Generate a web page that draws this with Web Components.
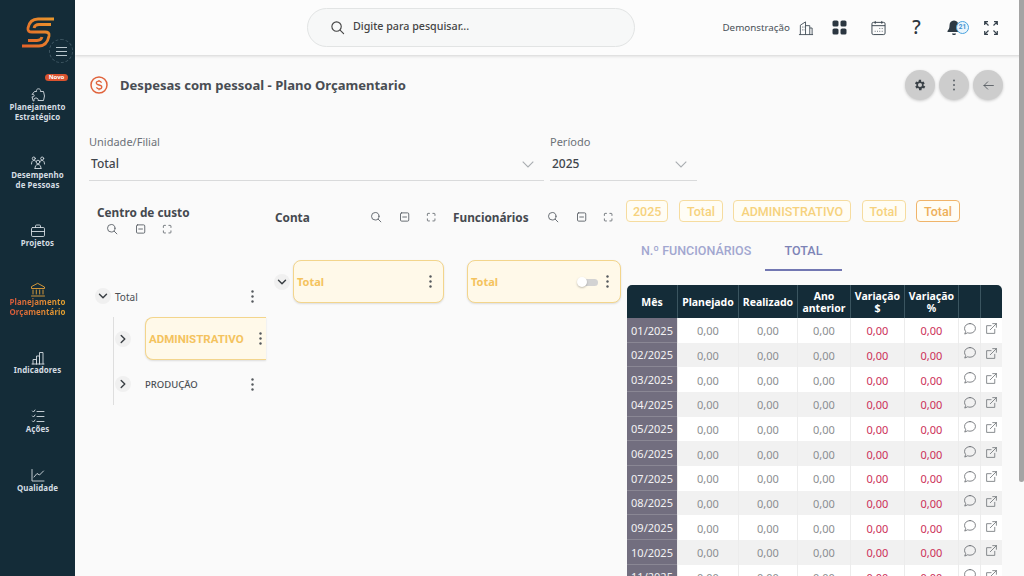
<!DOCTYPE html>
<html lang="pt-BR"><head><meta charset="utf-8"><title>Plano Orçamentario</title>
<style>
html,body{margin:0;padding:0;height:100%;overflow:hidden;background:#fafafa;font-family:"Noto Sans","Liberation Sans",sans-serif}
</style></head><body>
<app-shell></app-shell>
<script>
const I={
 search:'<circle cx="7" cy="7" r="5"/><path d="M11 11l3.500 3.500"/>',
 minus:'<rect x="2" y="2.500" width="11" height="11" rx="1.500"/><path d="M5 8h5"/>',
 full:'<path d="M2 5V3a1 1 0 0 1 1-1h2M10 2h2a1 1 0 0 1 1 1v2M13 10v2a1 1 0 0 1-1 1h-2M5 13H3a1 1 0 0 1-1-1v-2"/>',
 chatv:'<path d="M8 1.800c3.600 0 6.200 2.400 6.200 5.500s-2.600 5.500-6.200 5.500c-.9 0-1.800-.2-2.600-.5L2 13.800l1-3C2.200 9.800 1.800 8.600 1.800 7.300 1.800 4.200 4.400 1.800 8 1.800z"/>',
 ext:'<path d="M12 9v5H2V4.500h5.500"/><path d="M6.500 9.500L14 2M9.500 2H14v4.500"/>'
};
const svg=(p,s=16,vb=16,extra='')=>`<svg width="${s}" height="${s}" viewBox="0 0 ${vb} ${vb}" fill="none" stroke="currentColor" stroke-width="1.200" stroke-linecap="round" stroke-linejoin="round" ${extra}>${p}</svg>`;
function def(name,css,html,setup){
 customElements.define(name,class extends HTMLElement{
  connectedCallback(){ if(this.shadowRoot)return;
   const r=this.attachShadow({mode:'open'});
   r.innerHTML=`<style>${css}</style>`+(typeof html==='function'?html(this):html);
   setup&&setup(r,this);
  }
 });
}
const UB='"Noto Sans","Open Sans",sans-serif';
const RB='Roboto,"Liberation Sans",sans-serif';

def('nav-item',`
 :host{display:flex;flex-direction:column;align-items:center;color:#d5dde2;position:relative}
 :host([active]){color:#e5a23a}
 svg{display:block;height:16px;width:16px;margin-bottom:.5px}
 .l{font:700 7.900px/9.500px ${UB};text-align:center;white-space:pre-line;letter-spacing:.1px}
 :host([active]) .l{background:linear-gradient(90deg,#d9573a,#e8a62f);-webkit-background-clip:text;background-clip:text;color:transparent}
`,h=>`<svg viewBox="0 0 16 16" fill="none" stroke="currentColor" stroke-width=".9" stroke-linecap="round" stroke-linejoin="round">${h.dataset.i}</svg><div class="l">${h.getAttribute('label')}</div>`);

def('side-nav',`
 :host{display:flex;flex-direction:column;width:75px;flex:none;background:#142c38;position:relative;box-sizing:border-box;height:100%}
 .logo{height:74px;padding:17px 0 0 21px;box-sizing:border-box;flex:none}
 .burger{position:absolute;left:49px;top:39px;width:24px;height:24px;border:1px dashed #3d5561;border-radius:50%;display:flex;align-items:center;justify-content:center;color:#b9c6cc;box-sizing:border-box}
 .novo{position:absolute;left:45px;top:74px;width:23px;height:7px;border-radius:4px;background:#d9532f;color:#fff;font:700 6px/7px ${UB};text-align:center}
 nav{display:flex;flex-direction:column;padding-top:12.500px;gap:32.700px}
`,`<div class="logo"><svg width="34" height="31" viewBox="0 0 34 31" fill="none" stroke-width="2.800"><defs><linearGradient id="g" gradientUnits="userSpaceOnUse" x1="0" y1="30" x2="34" y2="0"><stop offset="0" stop-color="#e4602a"/><stop offset="1" stop-color="#ea9a2c"/></linearGradient></defs><g stroke="url(#g)"><path d="M33 2H17C11 2 8 6 7 11 6.500 14 8 15 11 15H24C27 15 28.500 16 28 19 27 24 24 29 18 29H1"/><path d="M30 7.500H18C15 7.500 13.500 9 13 11"/><path d="M7 23.500H16C19 23.500 20.500 22 21 20"/></g></svg></div>
 <div class="burger"><svg width="11" height="9" viewBox="0 0 11 9" stroke="currentColor" stroke-width="1"><path d="M0 .5h11M0 4.500h11M0 8.500h11"/></svg></div>
 <div class="novo">Novo</div>
 <nav>
 <nav-item label="Planejamento
Estratégico" data-i='<path d="M3 13.500L2 9.800C3.500 10.300 4.500 9.300 4.100 8.200 3.800 7.200 2.600 7 2 7.600L4.500 4.500H6.600C6 3 7 1.800 8.500 1.800S11 3 10.400 4.500H13.500L14.500 9 13.500 13.500H8C8.500 12 7.500 11 6 11S3.500 12 4 13.500z"/>'></nav-item>
 <nav-item label="Desempenho
de Pessoas" data-i='<circle cx="8" cy="7" r="1.800"/><circle cx="3.800" cy="3.500" r="1.500"/><circle cx="12.200" cy="3.500" r="1.500"/><path d="M5 13.500c0-2.500 1-4 3-4s3 1.500 3 4M1.500 9c0-2 .8-3.500 2.300-3.500s2 .7 2.200 1M14.500 9c0-2-.8-3.500-2.300-3.500s-2 .7-2.200 1M5 13.500h6"/>'></nav-item>
 <nav-item label="Projetos" data-i='<rect x="1.500" y="4.500" width="13" height="9" rx="1.200"/><path d="M5.500 4.500V3a1 1 0 0 1 1-1h3a1 1 0 0 1 1 1v1.500M1.500 8.500h13"/>'></nav-item>
 <nav-item active label="Planejamento
Orçamentário" data-i='<path d="M8 1.500L14.500 5v1.500h-13V5zM3 8v4M6.300 8v4M9.700 8v4M13 8v4M1.500 14h13"/>'></nav-item>
 <nav-item label="Indicadores" data-i='<path d="M3 14V9.500h3.500V14M6.500 14V6H9.500v8M9.500 14V2.500h3.500V14M2 14h12"/>'></nav-item>
 <nav-item label="Ações" data-i='<path d="M2.500 3l1 1 1.500-2M2.500 8l1 1 1.500-2M2.500 13l1 1 1.500-2M7 3.500h7M7 8.500h7M7 13.500h7"/>'></nav-item>
 <nav-item label="Qualidade" data-i='<path d="M2 2.500v11.500h12M4 10l3-3.500 2.500 1.500 4-4"/>'></nav-item>
 </nav>`);

def('top-bar',`
 :host{display:flex;align-items:center;height:55px;flex:none;background:#fcfcfc;box-shadow:0 1px 3px rgba(0,0,0,.16);position:relative;z-index:2;box-sizing:border-box;padding:0 26px 0 232px;color:#2d3a44}
 .s{width:328px;height:39px;box-sizing:border-box;border:1px solid #e2e4e4;border-radius:20px;background:#f7f8f8;display:flex;align-items:center;gap:8px;padding-left:22px;color:#444;font:500 10.700px ${UB}}
 .s span{padding-bottom:3px}
 .r{margin-left:auto;display:flex;align-items:center;font:400 9.800px ${UB};color:#4a5158}
 .ic{display:flex;align-items:center;justify-content:center;color:#36424c}
 .q{font:500 19px/19px ${UB};color:#2b3640;width:11px;margin-right:25px}
 .bell{position:relative;width:22px;margin-right:15px;justify-content:flex-start}
 .b{position:absolute;left:9px;top:1px;width:13px;height:13px;box-sizing:border-box;border-radius:50%;border:1px solid #4aa3df;background:#eaf5fc;color:#3c8fd0;font:700 6.500px/11px ${RB};text-align:center}
`,`<div class="s">${svg(I.search,15)}<span>Digite para pesquisar...</span></div>
 <div class="r"><span style="margin-right:8px">Demonstração</span>
 <span class="ic" style="margin-right:18px"><svg width="16" height="16" viewBox="0 0 17 16" fill="none" stroke="currentColor" stroke-width=".9"><path d="M1 15h15M2.500 15V5L8 1.500V15M8 5.500h4.500V15M12.500 8H15v7M4.500 7h.8M6 7h.8M4.500 10h.8M6 10h.8"/></svg></span>
 <span class="ic" style="margin-right:24px"><svg width="15" height="15" viewBox="0 0 15 15" fill="#2b3640"><rect x=".5" y=".5" width="6" height="6" rx="1.600"/><rect x="8.500" y=".5" width="6" height="6" rx="1.600"/><rect x=".5" y="8.500" width="6" height="6" rx="1.600"/><rect x="8.500" y="8.500" width="6" height="6" rx="1.600"/></svg></span>
 <span class="ic" style="margin-right:25px"><svg width="15" height="16" viewBox="0 0 16 17" fill="none" stroke="currentColor" stroke-width="1"><rect x="1" y="2.500" width="14" height="13" rx="1.500"/><path d="M1 6h14M4.500 1v3M11.500 1v3M9 9h.8M11.500 9h.8M4 12h.8M6.500 12h.8M9 12h.8M11.500 12h.8"/></svg></span>
 <span class="ic q">?</span>
 <span class="ic bell"><svg width="14" height="15" viewBox="0 0 14 15" fill="#2e3a44"><path d="M7 .5c3 0 4.500 2.200 4.500 5 0 2.500.7 4 2 5.500v1H.5v-1c1.300-1.500 2-3 2-5.500 0-2.800 1.500-5 4.500-5zM5 13.500h4c0 1-1 1.500-2 1.500s-2-.5-2-1.500z"/></svg><span class="b">21</span></span>
 <span class="ic"><svg width="14" height="14" viewBox="0 0 14 14" fill="none" stroke="currentColor" stroke-width="1.200"><path d="M.7 4V.7H4M.7.7l3.800 3.800M10 .7h3.300V4M13.300.7L9.500 4.500M.7 10v3.300H4M.7 13.300l3.800-3.800M13.300 10v3.300H10M13.300 13.300L9.500 9.500"/></svg></span>
 </div>`);

def('page-head',`
 :host{display:flex;align-items:center;height:30px;color:#454a50}
 .d{width:18px;height:18px;margin:0 12px 0 1px;color:#e0633c}
 h1{font:700 13.050px ${UB};margin:0;color:#494d53}
 .a{margin-left:auto;display:flex;gap:4px}
 .c{width:30px;height:30px;border-radius:50%;background:#cdcdcd;box-shadow:0 1px 3px rgba(0,0,0,.2);display:flex;align-items:center;justify-content:center;color:#4b5157}
`,`<svg class="d" viewBox="0 0 18 18" fill="none" stroke="currentColor"><circle cx="9" cy="9" r="8" stroke-width="1.500"/><path d="M11.500 6.800C11.100 5.800 10 5.200 9 5.200 7.500 5.200 6.300 5.900 6.300 7.100S7.500 8.700 9 9s2.800.8 2.800 2-1.300 1.900-2.800 1.900c-1 0-2.100-.6-2.500-1.600M9 3.900v1.300M9 12.900v1.300" stroke-width="1.300"/></svg>
 <h1>Despesas com pessoal - Plano Orçamentario</h1>
 <div class="a"><span class="c"><svg width="14" height="14" viewBox="0 0 24 24" fill="#3a4147"><path fill-rule="evenodd" d="M19.400 13a7.500 7.500 0 0 0 0-2l2.100-1.600-2-3.500-2.500 1a7.500 7.500 0 0 0-1.700-1L15.500 3.200h-4l-.4 2.700a7.500 7.500 0 0 0-1.700 1l-2.500-1-2 3.500L7.500 11a7.500 7.500 0 0 0 0 2l-2.100 1.600 2 3.500 2.500-1c.5.4 1.100.7 1.700 1l.4 2.700h4l.4-2.700c.6-.3 1.200-.6 1.700-1l2.500 1 2-3.500zM13.500 15.500a3.500 3.500 0 1 1 0-7 3.500 3.500 0 0 1 0 7z" transform="translate(-1.500 0)"/></svg></span>
 <span class="c"><svg width="4" height="12" viewBox="0 0 4 12" fill="#5c6268"><circle cx="2" cy="1.500" r="1"/><circle cx="2" cy="6" r="1"/><circle cx="2" cy="10.500" r="1"/></svg></span>
 <span class="c">${svg('<path d="M14 8H2.500M7 3.500L2.500 8 7 12.500"/>',13,16,'style="stroke-width:1"')}</span></div>`);

def('select-field',`
 :host{display:block;box-sizing:border-box;border-bottom:1px solid #d9dadb;height:46px}
 label{display:block;font:400 11px/14px ${UB};color:#6c7178;margin-bottom:6px}
 .v{display:flex;justify-content:space-between;align-items:center;font:500 12px/18px ${UB};color:#41464c;padding:0 10px 0 2px}
 svg{color:#a9adb1}
`,h=>`<label>${h.getAttribute('label')}</label><div class="v"><span>${h.getAttribute('value')}</span><svg width="12" height="7" viewBox="0 0 12 7" fill="none" stroke="currentColor" stroke-width="1.100"><path d="M.7.7L6 6 11.300.7"/></svg></div>`);

def('tool-icons',`
 :host{display:inline-flex;align-items:center;color:#5a6066}
 svg{display:block}
 svg:nth-of-type(1){margin-right:17px}
 svg:nth-of-type(2){margin-right:14.500px}
`,`${svg(I.search,12)}${svg(I.minus,12)}${svg(I.full,11)}`);

def('kebab-btn',`:host{display:inline-flex;width:12px;height:14px;align-items:center;justify-content:center;flex:none;color:#55595e}`,
 `<svg width="3" height="13" viewBox="0 0 3 13" fill="currentColor"><circle cx="1.500" cy="1.500" r="1.200"/><circle cx="1.500" cy="6.500" r="1.200"/><circle cx="1.500" cy="11.500" r="1.200"/></svg>`);

def('tree-toggle',`:host{display:inline-flex;width:16px;height:16px;border-radius:50%;background:#f0f0f0;align-items:center;justify-content:center;flex:none;color:#3a3f44}`,
 h=>`<svg width="10" height="10" viewBox="0 0 10 10" fill="none" stroke="currentColor" stroke-width="1.400" stroke-linecap="round" stroke-linejoin="round"><path d="${h.hasAttribute('open')?'M1.500 3.200L5 6.800l3.500-3.600':'M3.200 1.500L6.800 5 3.200 8.500'}"/></svg>`);

def('node-card',`
 :host{display:flex;align-items:center;box-sizing:border-box;height:43px;background:#fff9e9;border:1px solid #f3d58c;border-radius:8px;box-shadow:0 1px 2px rgba(0,0,0,.12);padding:0 7px 0 3px;font:700 11.500px ${RB};color:#f4c35e}
 :host([ub]){font:700 11px ${UB}}
 span{flex:1;white-space:nowrap}
`,`<span><slot name="t"></slot></span><slot></slot>`);

def('col-head',`
 :host{display:block;font:700 11.800px/16px ${UB};color:#45494f}
`,`<slot></slot>`);

def('toggle-sw',`
 :host{display:block;position:relative;width:21px;height:12px;flex:none;margin-right:3px}
 i{position:absolute;left:3px;top:3px;right:0;height:7px;border-radius:4px;background:#d3d3d3}
 b{position:absolute;left:0;top:1px;width:10px;height:10px;border-radius:50%;background:#fff;box-shadow:0 1px 2px rgba(0,0,0,.25)}
`,`<i></i><b></b>`);

def('tree-panel',`
 :host{display:flex;gap:0;align-items:flex-start;height:214px;flex:none;overflow:hidden;width:534px}
 .c1{width:176px;flex:none;box-sizing:border-box}
 .c1 tool-icons{display:flex;margin:3px 0 0 17px}
 .root{display:flex;align-items:center;margin:51px 0 0 6px;font:400 10px ${UB};color:#4a4f54;height:20px}
 .root span{margin:1px 0 0 4px;flex:1}
 .root kebab-btn{margin-right:7px}
 .kids{margin:11px 0 0 24px;border-left:1px solid #dedede;display:flex;flex-direction:column;height:88px;width:152px}
 .row{display:flex;align-items:center;padding-left:1px}
 .row node-card{margin-left:14px;flex:1;border-radius:8px 0 0 8px;border-right:0;padding-right:0;min-width:0}
 .row.p{margin-top:14px;font:500 9.500px ${UB};color:#4a4f54;height:20px}
 .row.p span{margin-left:14px;flex:1}
 .row.p kebab-btn{margin-right:8px}
 .c2{width:188px;flex:none;padding-left:10px;box-sizing:border-box}
 .c3{width:168px;flex:none;box-sizing:border-box}
 .hh{display:flex;align-items:center;height:16px;margin-top:9px}
 .hh tool-icons{margin-left:auto}
 .c2 .hh tool-icons{margin-right:16.500px}
 .c3 .hh tool-icons{margin-right:7.500px}
 .cardrow{display:flex;align-items:center;margin-top:35px}
 .c2 .cardrow{margin-left:-1px}
 .c2 tree-toggle{margin-right:3px}
 .c2 node-card{width:151px}
 .c3 .cardrow{margin-left:14px}
 .c3 node-card{width:154px}
`,`<div class="c1"><col-head style="padding-left:8px;margin-top:4px">Centro de custo</col-head><tool-icons></tool-icons>
 <div class="root"><tree-toggle open></tree-toggle><span>Total</span><kebab-btn></kebab-btn></div>
 <div class="kids">
  <div class="row"><tree-toggle></tree-toggle><node-card><span slot="t">ADMINISTRATIVO</span><kebab-btn></kebab-btn></node-card></div>
  <div class="row p"><tree-toggle></tree-toggle><span>PRODUÇÃO</span><kebab-btn></kebab-btn></div>
 </div></div>
 <div class="c2"><div class="hh"><col-head>Conta</col-head><tool-icons></tool-icons></div>
  <div class="cardrow"><tree-toggle open></tree-toggle><node-card ub><span slot="t">Total</span><kebab-btn></kebab-btn></node-card></div></div>
 <div class="c3"><div class="hh"><col-head>Funcionários</col-head><tool-icons></tool-icons></div>
  <div class="cardrow"><node-card ub><span slot="t">Total</span><toggle-sw></toggle-sw><kebab-btn></kebab-btn></node-card></div></div>`);

def('chip-tag',`:host{display:inline-flex;align-items:center;box-sizing:border-box;height:22px;padding:0 7px;border:1px solid #f6dc9f;border-radius:4px;background:#fffdf5;font:500 12.500px ${RB};color:#f6d27d;white-space:nowrap}
 :host([strong]){border-color:#f0b46a;color:#eeb05a}
 :host([year]){padding:0 6px}`,`<slot></slot>`);

def('tab-bar',`
 :host{display:flex;height:41px;font:500 12.500px/42px ${RB};color:#a2a7d0;box-sizing:border-box}
 span{text-align:center;box-sizing:border-box}
 .n{width:138px;padding-left:14px;text-align:left}
 .on{width:77px;color:#7d83b6;border-bottom:2px solid #7277b2;height:41px;line-height:42px}
`,`<span class="n">N.º FUNCIONÁRIOS</span><span class="on">TOTAL</span>`);

def('data-table',`
 :host{display:block;width:375px;font:400 11px ${UB}}
 table{border-collapse:separate;border-spacing:0;table-layout:fixed;width:375px}
 th{background:#142c38;color:#fff;font:700 10.500px/12px ${UB};height:33px;padding:0;border-left:1px solid #3b5560;box-sizing:border-box}
 th:first-child{border-left:0;border-top-left-radius:5px}
 th:last-child{border-top-right-radius:5px}
 td{height:24.670px;padding:1px 0 0;text-align:center;color:#8b8e91;background:#fff;border-left:1px solid #ececec;box-sizing:border-box;font-size:11px}
 tr:nth-child(even) td{background:#f1f1f1}
 td:first-child,tr:nth-child(even) td:first-child{background:#726e7f;color:#f2f2f4;border-left:0;border-bottom:1px solid #8a8794}
 td.r{color:#cc3058}
 svg{display:block;margin:-4px auto 0;color:#5f6468}
`,`<table><colgroup><col style="width:50px"><col style="width:61px"><col style="width:59px"><col style="width:53px"><col style="width:54px"><col style="width:54px"><col style="width:22px"><col style="width:22px"></colgroup>
 <thead><tr><th>Mês</th><th>Planejado</th><th>Realizado</th><th>Ano<br>anterior</th><th>Variação<br>$</th><th>Variação<br>%</th><th></th><th></th></tr></thead>
 <tbody>${Array.from({length:11},(_,i)=>`<tr><td>${String(i+1).padStart(2,'0')}/2025</td><td>0,00</td><td>0,00</td><td>0,00</td><td class="r">0,00</td><td class="r">0,00</td><td>${svg(I.chatv,14,16,'style="stroke-width:.9"')}</td><td>${svg(I.ext,13,16,'style="stroke-width:.9"')}</td></tr>`).join('')}</tbody></table>`);

def('detail-panel',`
 :host{display:block;flex:none;width:375px}
 .chips{display:flex;gap:10.500px;margin:0 0 0 -1px;height:22px}
 tab-bar{margin-top:8px}
 data-table{margin-top:14px}
`,`<div class="chips"><chip-tag year>2025</chip-tag><chip-tag>Total</chip-tag><chip-tag>ADMINISTRATIVO</chip-tag><chip-tag>Total</chip-tag><chip-tag strong>Total</chip-tag></div><tab-bar></tab-bar><data-table></data-table>`);

def('app-shell',`
 :host{display:flex;width:1024px;height:576px;overflow:hidden;position:relative;background:#fafafa}
 main{flex:1;display:flex;flex-direction:column;min-width:0}
 .page{padding:15px 21px 0 14px;flex:1;overflow:hidden}
 .filters{display:grid;grid-template-columns:455px 147px;gap:6px;margin-top:35px}
 .work{display:flex;gap:4px;margin-top:19px}
 .sb{position:absolute;right:0;top:0;width:5px;height:482px;background:#a4a4a4;border-radius:0 0 3px 3px;z-index:3}
`,`<side-nav></side-nav><main><top-bar></top-bar>
 <div class="page"><page-head></page-head>
 <div class="filters"><select-field label="Unidade/Filial" value="Total"></select-field><select-field label="Período" value="2025"></select-field></div>
 <div class="work"><tree-panel></tree-panel><detail-panel></detail-panel></div>
 </div></main><div class="sb"></div>`);
</script>
</body></html>
